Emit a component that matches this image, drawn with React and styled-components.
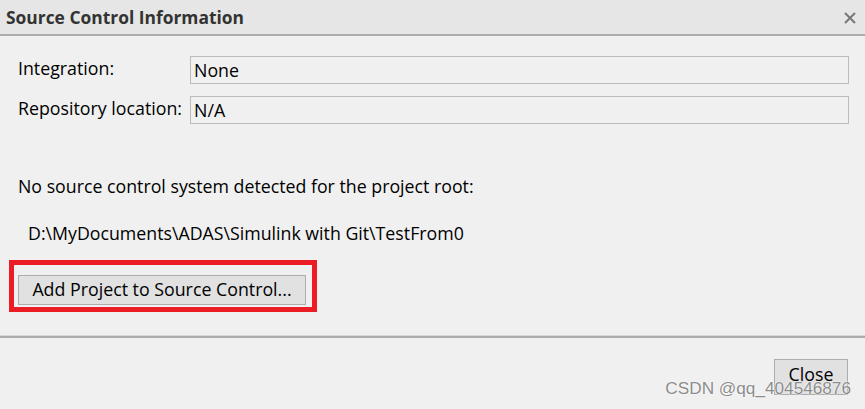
import React from "react";
import styled, { createGlobalStyle } from "styled-components";

const Global = createGlobalStyle`
  html, body { margin: 0; padding: 0; background: #f0f0f0; }
  body { font-family: "Open Sans", "Noto Sans", sans-serif; }
`;

const Dialog = styled.div`
  position: relative;
  width: 865px;
  height: 409px;
  background: #f0f0f0;
  display: flex;
  flex-direction: column;
  overflow: hidden;
  color: #000;
`;

const TitleBar = styled.div`
  height: 36px;
  flex-shrink: 0;
  box-sizing: border-box;
  background: #e6e6e6;
  border-bottom: 2px solid #adadad;
  display: flex;
  align-items: center;
  justify-content: space-between;
  padding: 0 9px 0 6px;
`;

const Title = styled.div`
  font-size: 17.4px;
  font-weight: 700;
  color: #333;
`;

const CloseX = styled.svg`
  width: 12px;
  height: 12px;
  margin-top: 1px;
`;

const Body = styled.div`
  display: flex;
  flex-direction: column;
  padding: 20px 16px 0 18px;
`;

const Fields = styled.div`
  display: grid;
  grid-template-columns: 172px 1fr;
  row-gap: 12px;
`;

const Label = styled.div`
  font-size: 17.8px;
  line-height: 24px;
`;

const Field = styled.div`
  height: 28px;
  box-sizing: border-box;
  border: 1px solid #bcbcbc;
  background: #f0f0f0;
  font-size: 17.8px;
  line-height: 27px;
  padding-left: 3px;
`;

const Message = styled.div`
  font-size: 17.75px;
  line-height: 24px;
  margin-top: 50px;
`;

const Path = styled.div`
  font-size: 17.75px;
  line-height: 24px;
  margin-top: 23px;
  padding-left: 10px;
`;

const ButtonWrap = styled.div`
  position: relative;
  align-self: flex-start;
  margin-top: 30px;
`;

const Button = styled.button`
  font-family: "Open Sans", "Noto Sans", sans-serif;
  font-size: 17.8px;
  color: #000;
  background: #e1e1e1;
  border: 1px solid #adadad;
  box-sizing: border-box;
  height: ${(p) => p.$h}px;
  width: ${(p) => p.$w}px;
  padding: 0 0 ${(p) => p.$pb || 0}px;
  line-height: 1;
  display: flex;
  align-items: center;
  justify-content: center;
`;

const Highlight = styled.div`
  position: absolute;
  left: -9px;
  top: -15px;
  width: 308px;
  height: 52px;
  box-sizing: border-box;
  border: 5px solid #ec1c24;
  pointer-events: none;
`;

const Separator = styled.div`
  height: 2px;
  flex-shrink: 0;
  background: #adadad;
  border-top: 1px solid #d8d8d8;
  margin-top: 30px;
`;

const Footer = styled.div`
  flex: 1;
  display: flex;
  justify-content: flex-end;
  align-items: flex-start;
  padding: 21px 17px 0 0;
`;

const Watermark = styled.div`
  position: absolute;
  right: 14px;
  bottom: 10px;
  font-family: "Liberation Sans", Arial, sans-serif;
  font-size: 17.2px;
  color: #8c8c8c;
  text-shadow: 0 0 2px #fff, 0 0 1px #fff;
  pointer-events: none;
`;

export default function App() {
  return (
    <>
      <Global />
      <Dialog>
        <TitleBar>
          <Title>Source Control Information</Title>
          <CloseX viewBox="0 0 12 12">
            <path d="M1 1 L11 11 M11 1 L1 11" stroke="#777" strokeWidth="2" />
          </CloseX>
        </TitleBar>
        <Body>
          <Fields>
            <Label>Integration:</Label>
            <Field>None</Field>
            <Label>Repository location:</Label>
            <Field>N/A</Field>
          </Fields>
          <Message>No source control system detected for the project root:</Message>
          <Path>D:\MyDocuments\ADAS\Simulink with Git\TestFrom0</Path>
          <ButtonWrap>
            <Button $w={288} $h={30}>Add Project to Source Control...</Button>
            <Highlight />
          </ButtonWrap>
        </Body>
        <Separator />
        <Footer>
          <Button $w={74} $h={36} $pb={4}>Close</Button>
        </Footer>
        <Watermark>CSDN @qq_404546876</Watermark>
      </Dialog>
    </>
  );
}
